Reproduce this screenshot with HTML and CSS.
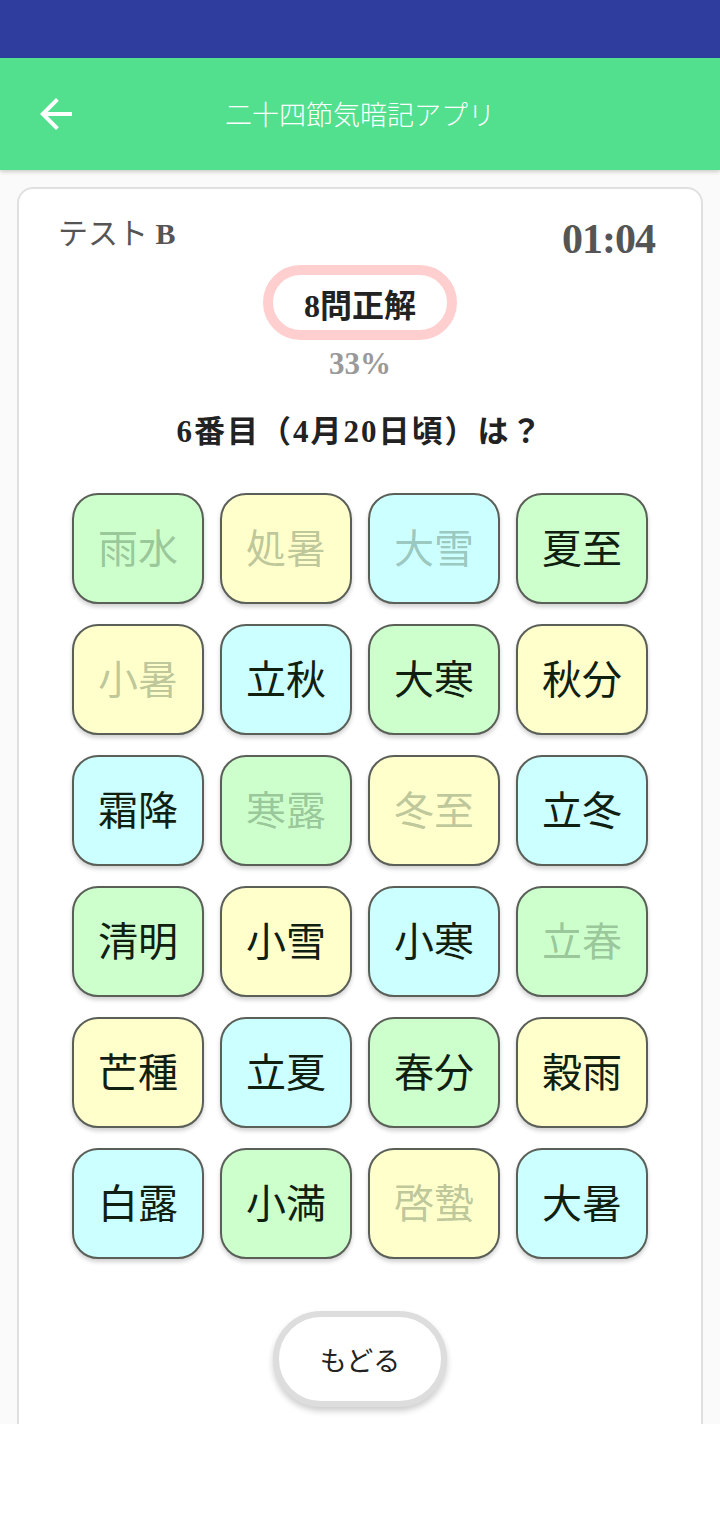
FILE: index.html
```html
<!DOCTYPE html>
<html lang="ja">
<head>
<meta charset="utf-8">
<title>二十四節気暗記アプリ</title>
<link rel="stylesheet" href="styles.css">
</head>
<body>
<div class="screen">
  <div class="status"></div>
  <header class="appbar">
    <svg class="back" viewBox="0 0 24 24" width="48" height="48"><path d="M20 11H7.83l5.59-5.59L12 4l-8 8 8 8 1.41-1.41L7.83 13H20v-2z" fill="#fff"/></svg>
    <h1 class="title">二十四節気暗記アプリ</h1>
  </header>
  <main class="main">
    <section class="card">
      <div class="card-head">
        <span class="test-name">テスト <b>B</b></span>
        <span class="timer">01:04</span>
      </div>
      <div class="score">8問正解</div>
      <div class="percent">33%</div>
      <div class="question">6番目（4月20日頃）は？</div>
      <div class="grid">
        <button class="cell green done">雨水</button>
        <button class="cell yellow done">処暑</button>
        <button class="cell cyan done">大雪</button>
        <button class="cell green">夏至</button>
        <button class="cell yellow done">小暑</button>
        <button class="cell cyan">立秋</button>
        <button class="cell green">大寒</button>
        <button class="cell yellow">秋分</button>
        <button class="cell cyan">霜降</button>
        <button class="cell green done">寒露</button>
        <button class="cell yellow done">冬至</button>
        <button class="cell cyan">立冬</button>
        <button class="cell green">清明</button>
        <button class="cell yellow">小雪</button>
        <button class="cell cyan">小寒</button>
        <button class="cell green done">立春</button>
        <button class="cell yellow">芒種</button>
        <button class="cell cyan">立夏</button>
        <button class="cell green">春分</button>
        <button class="cell yellow">穀雨</button>
        <button class="cell cyan">白露</button>
        <button class="cell green">小満</button>
        <button class="cell yellow done">啓蟄</button>
        <button class="cell cyan">大暑</button>
      </div>
      <div class="back-wrap">
        <button class="back-btn">もどる</button>
      </div>
    </section>
  </main>
</div>
</body>
</html>
```
FILE: styles.css
```css
html, body {
  margin: 0;
  padding: 0;
  background: #ffffff;
}
body {
  font-family: "Liberation Serif", "Noto Sans CJK JP", serif;
}
.screen {
  width: 720px;
  height: 1424px;
  overflow: hidden;
  display: flex;
  flex-direction: column;
}
.status {
  height: 58px;
  background: #2f3e9e;
  flex: none;
}
.appbar {
  height: 112px;
  flex: none;
  background: #52e08f;
  display: flex;
  align-items: center;
  position: relative;
  z-index: 1;
  box-shadow: 0 2px 4px rgba(0,0,0,0.18);
}
.back {
  margin-left: 32px;
  flex: none;
}
.title {
  margin: 0;
  position: absolute;
  left: 0;
  right: 0;
  text-align: center;
  font-family: "Noto Sans CJK JP", sans-serif;
  font-weight: 300;
  font-size: 27px;
  color: #ffffff;
  line-height: 112px;
  pointer-events: none;
}
.main {
  flex: 1;
  background: #fafafa;
  padding: 17px 17px 0;
  overflow: hidden;
}
.card {
  background: #ffffff;
  border: 2px solid #e0e0e0;
  border-radius: 16px;
  min-height: 1400px;
  display: flex;
  flex-direction: column;
  align-items: center;
}
.card-head {
  align-self: stretch;
  display: flex;
  justify-content: space-between;
  align-items: flex-start;
  padding: 20px 46px 0 39px;
}
.test-name {
  font-size: 30px;
  line-height: 50px;
  color: #555555;
}
.test-name b {
  font-weight: bold;
}
.timer {
  font-size: 42px;
  font-weight: bold;
  line-height: 50px;
  margin-top: 5px;
  color: #555555;
  letter-spacing: -1px;
}
.score {
  margin-top: 1px;
  width: 174px;
  height: 55px;
  border: 10px solid #ffcfcf;
  border-radius: 38px;
  display: flex;
  align-items: center;
  justify-content: center;
  font-size: 32px;
  font-weight: bold;
  color: #222222;
}
.percent {
  margin-top: 4px;
  font-size: 31px;
  font-weight: bold;
  line-height: 40px;
  color: #999999;
}
.question {
  margin-top: 28px;
  font-size: 31px;
  font-weight: bold;
  line-height: 40px;
  letter-spacing: 2px;
  color: #222222;
}
.grid {
  margin-top: 41px;
  display: grid;
  grid-template-columns: repeat(4, 132px);
  grid-auto-rows: 111px;
  column-gap: 16px;
  row-gap: 20px;
}
.cell {
  margin: 0;
  padding: 0 0 6px;
  border: 2px solid #5a5f58;
  border-radius: 26px;
  font-family: "Noto Sans CJK JP", sans-serif;
  font-weight: 400;
  font-size: 40px;
  color: #102010;
  box-shadow: 0 3px 4px rgba(0,0,0,0.18);
  display: flex;
  align-items: center;
  justify-content: center;
}
.green { background: #ccffcc; }
.yellow { background: #ffffcc; }
.cyan { background: #ccffff; }
.cell.done { color: rgba(30, 60, 30, 0.3); }
.back-wrap {
  margin-top: 52px;
}
.back-btn {
  width: 174px;
  height: 96px;
  background: #ffffff;
  border: 6px solid #dddddd;
  border-radius: 48px;
  box-shadow: 0 4px 6px rgba(0,0,0,0.2);
  font-family: "Noto Sans CJK JP", sans-serif;
  font-size: 27px;
  color: #222222;
  padding: 0;
}
```
